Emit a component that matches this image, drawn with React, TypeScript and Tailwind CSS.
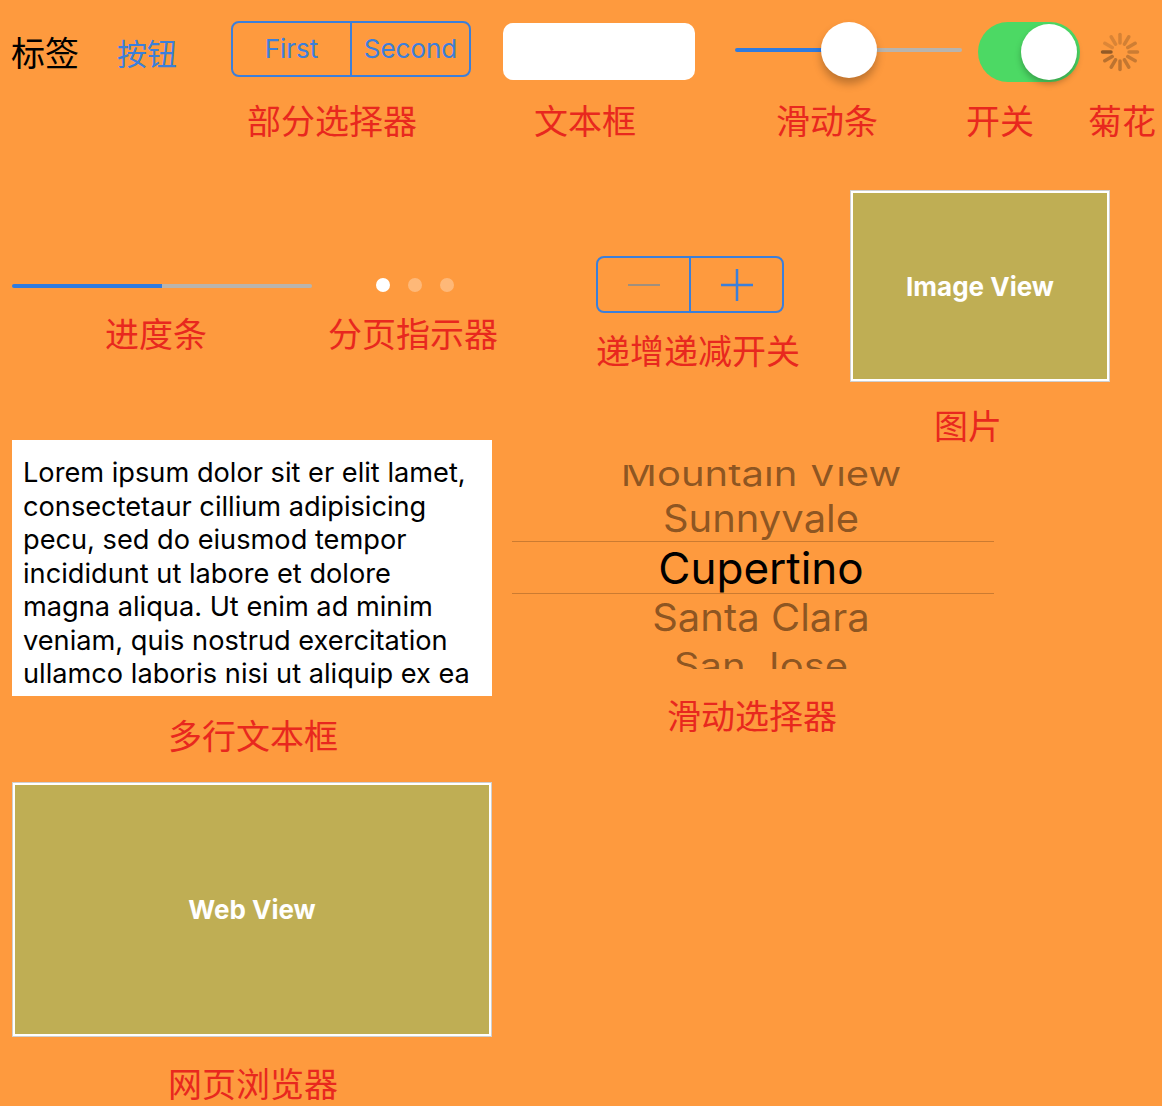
import React from 'react';

const cjk = "font-['Noto_Sans_CJK_SC',sans-serif]";
const latin = "font-['Inter','Noto_Sans_CJK_SC',sans-serif]";

const lorem = [
  'Lorem ipsum dolor sit er elit lamet,',
  'consectetaur cillium adipisicing',
  'pecu, sed do eiusmod tempor',
  'incididunt ut labore et dolore',
  'magna aliqua. Ut enim ad minim',
  'veniam, quis nostrud exercitation',
  'ullamco laboris nisi ut aliquip ex ea',
];

function Caption({ text, className = '' }: { text: string; className?: string }) {
  return (
    <div className={`whitespace-nowrap text-[34px] leading-none text-[#E8281E] ${cjk} ${className}`}>
      {text}
    </div>
  );
}

function Spinner() {
  const spokes = Array.from({ length: 12 }, (_, i) => {
    const a = ((180 - i * 30) * Math.PI) / 180;
    return {
      x1: 22 + Math.cos(a) * 9,
      y1: 22 + Math.sin(a) * 9,
      x2: 22 + Math.cos(a) * 17.5,
      y2: 22 + Math.sin(a) * 17.5,
      o: i === 0 ? 0.75 : 0.5 - i * 0.025,
    };
  });
  return (
    <svg width="44" height="44" viewBox="0 0 44 44">
      {spokes.map((s, i) => (
        <line
          key={i}
          x1={s.x1}
          y1={s.y1}
          x2={s.x2}
          y2={s.y2}
          stroke="#6e4520"
          strokeWidth="3.5"
          strokeLinecap="round"
          opacity={s.o}
        />
      ))}
    </svg>
  );
}

function Placeholder({ label, className }: { label: string; className: string }) {
  return (
    <div
      className={`flex items-center justify-center border-2 border-white bg-[#BFAE54] ring-1 ring-[#cfcfcf] ${className}`}
    >
      <span className={`text-[26px] font-bold text-white ${latin}`}>{label}</span>
    </div>
  );
}

export default function App() {
  return (
    <div className={`h-[1106px] w-[1162px] overflow-hidden bg-[#FE9A3E] ${latin}`}>
      {/* row 1 */}
      <div className="h-[180px] pt-[21px]">
        <div className="flex h-[62px] items-center">
          <span className={`ml-[11px] w-[106px] text-[34px] leading-none text-black ${cjk}`}>标签</span>
          <span className={`w-[114px] text-[30px] leading-none text-[#3B7FDB] ${cjk}`}>按钮</span>
          <div className="flex h-[56px] w-[240px] self-start rounded-[8px] border-2 border-[#3B7FDB] text-[26px] leading-none text-[#3B7FDB]">
            <div className="flex flex-1 items-center justify-center border-r-2 border-[#3B7FDB]">First</div>
            <div className="flex flex-1 items-center justify-center">Second</div>
          </div>
          <div className="ml-[32px] mt-[2px] h-[57px] w-[192px] self-start rounded-[10px] bg-white" />
          <div className="relative ml-[40px] mt-[1px] flex h-[56px] w-[227px] items-center self-start">
            <div className="h-[4px] w-[113px] rounded-l-full bg-[#2F7BE0]" />
            <div className="h-[4px] flex-1 rounded-r-full bg-[#B8B4AE]" />
            <div className="absolute left-[86px] top-0 h-[56px] w-[56px] rounded-full bg-white shadow-[0_6px_8px_rgba(0,0,0,0.25)]" />
          </div>
          <div className="ml-[16px] flex h-[60px] w-[102px] items-center justify-end rounded-full bg-[#4CD964] pr-[3px]">
            <div className="h-[56px] w-[56px] rounded-full bg-white shadow-[0_4px_6px_rgba(0,0,0,0.25)]" />
          </div>
          <div className="ml-[18px]">
            <Spinner />
          </div>
        </div>
        <div className="mt-[20px] flex">
          <Caption text="部分选择器" className="ml-[247px] w-[170px]" />
          <Caption text="文本框" className="ml-[117px] w-[102px]" />
          <Caption text="滑动条" className="ml-[140px] w-[102px]" />
          <Caption text="开关" className="ml-[88px] w-[68px]" />
          <Caption text="菊花" className="ml-[54px] w-[68px]" />
        </div>
      </div>

      {/* row 2 */}
      <div className="flex h-[260px] items-start">
        <div className="ml-[12px] flex w-[300px] flex-col">
          <div className="mt-[104px] flex h-[4px] w-full">
            <div className="h-full w-[150px] rounded-l-full bg-[#2F7BE0]" />
            <div className="h-full flex-1 rounded-r-full bg-[#B8B4AE]" />
          </div>
          <Caption text="进度条" className="ml-[93px] mt-[28px]" />
        </div>
        <div className="ml-[16px] flex w-[170px] flex-col">
          <div className="mt-[98px] flex h-[14px] gap-[18px] pl-[48px]">
            <div className="h-[14px] w-[14px] rounded-full bg-white" />
            <div className="h-[14px] w-[14px] rounded-full bg-white/30" />
            <div className="h-[14px] w-[14px] rounded-full bg-white/30" />
          </div>
          <Caption text="分页指示器" className="mt-[24px]" />
        </div>
        <div className="ml-[98px] flex w-[204px] flex-col">
          <div className="mt-[76px] flex h-[57px] w-[188px] rounded-[8px] border-2 border-[#3B7FDB]">
            <div className="flex flex-1 items-center justify-center border-r-2 border-[#3B7FDB]">
              <div className="h-[2px] w-[32px] bg-[#A08F7E]" />
            </div>
            <div className="flex flex-1 items-center justify-center">
              <svg width="32" height="32" viewBox="0 0 32 32">
                <path d="M16 0v32M0 16h32" stroke="#3B7FDB" strokeWidth="2.5" />
              </svg>
            </div>
          </div>
          <Caption text="递增递减开关" className="mt-[20px]" />
        </div>
        <div className="ml-[51px] flex flex-col">
          <Placeholder label="Image View" className="mt-[11px] h-[190px] w-[258px]" />
          <Caption text="图片" className="ml-[83px] mt-[27px]" />
        </div>
      </div>

      {/* row 3 */}
      <div className="flex h-[343px] items-start">
        <div className="ml-[12px] flex w-[480px] flex-col">
          <div className="h-[256px] bg-white pl-[11px] pt-[16px] text-[27.2px] leading-[33.5px] text-black">
            {lorem.map((l) => (
              <div key={l} className="whitespace-nowrap">
                {l}
              </div>
            ))}
          </div>
          <Caption text="多行文本框" className="ml-[156px] mt-[22px]" />
        </div>
        <div className="ml-[20px] flex w-[482px] flex-col">
          <div className="mt-[25px] flex h-[204px] flex-col overflow-hidden">
            <div className="-mt-[10px] flex h-[44px] shrink-0 items-center justify-center pb-[7px] pl-[16px] text-[40px] leading-none text-black/45">
              <span className="scale-y-[0.87] whitespace-nowrap">Mountain View</span>
            </div>
            <div className="flex h-[42px] shrink-0 items-center justify-center pb-[4px] pl-[16px] text-[40px] leading-none text-black/45">
              <span className="scale-y-[0.97] whitespace-nowrap">Sunnyvale</span>
            </div>
            <div className="flex h-[53px] shrink-0 items-center justify-center border-y border-black/20 pl-[16px] text-[44px] leading-none text-black">
              Cupertino
            </div>
            <div className="flex h-[46px] shrink-0 items-center justify-center pl-[16px] text-[40px] leading-none text-black/45">
              <span className="scale-y-[0.97] whitespace-nowrap">Santa Clara</span>
            </div>
            <div className="flex h-[40px] shrink-0 items-center justify-center pl-[16px] pt-[12px] text-[40px] leading-none text-black/45">
              <span className="scale-y-[0.87] whitespace-nowrap">San Jose</span>
            </div>
          </div>
          <Caption text="滑动选择器" className="ml-[155px] mt-[29px]" />
        </div>
      </div>

      {/* row 4 */}
      <div className="flex flex-col">
        <Placeholder label="Web View" className="ml-[13px] h-[253px] w-[478px]" />
        <Caption text="网页浏览器" className="ml-[168px] mt-[30px]" />
      </div>
    </div>
  );
}
